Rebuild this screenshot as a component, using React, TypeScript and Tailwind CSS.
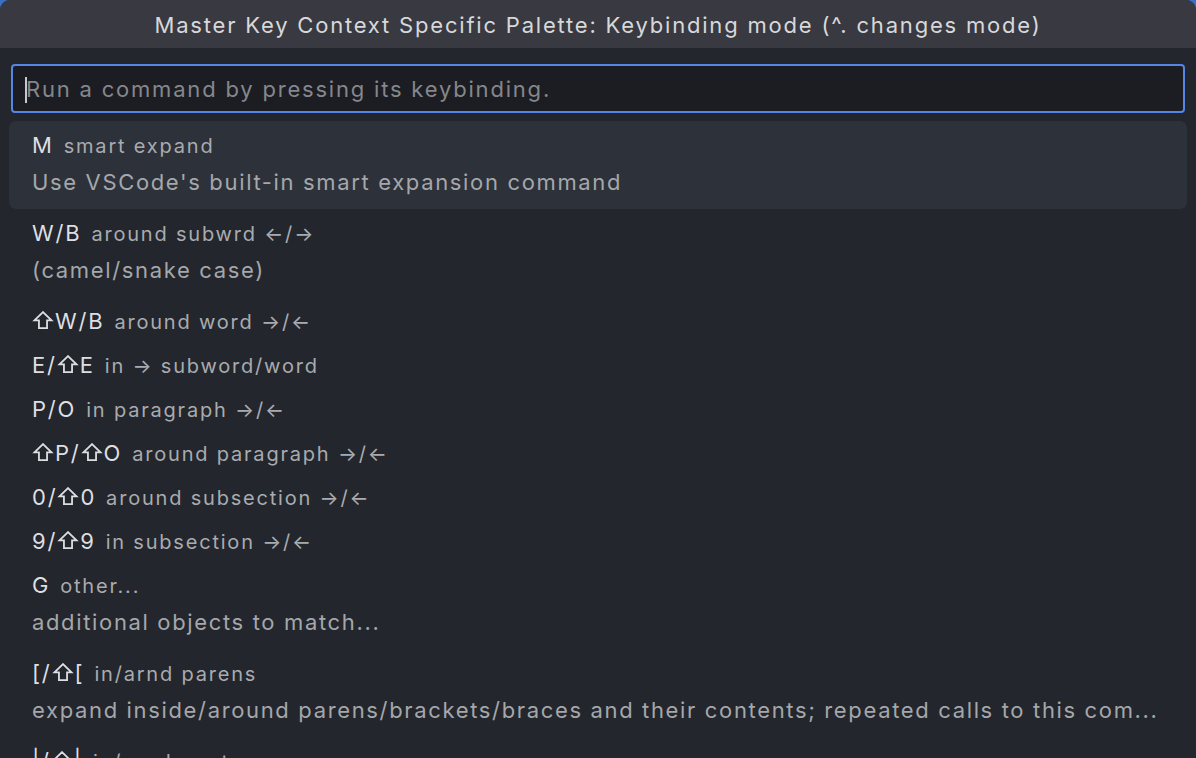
const items: { keys: string[]; label: string; desc?: string; selected?: boolean }[] = [
  { keys: ["M"], label: "smart expand", desc: "Use VSCode's built-in smart expansion command", selected: true },
  { keys: ["W/B"], label: "around subwrd ←/→", desc: "(camel/snake case)" },
  { keys: ["S", "W/B"], label: "around word →/←" },
  { keys: ["E/", "S", "E"], label: "in → subword/word" },
  { keys: ["P/O"], label: "in paragraph →/←" },
  { keys: ["S", "P/", "S", "O"], label: "around paragraph →/←" },
  { keys: ["0/", "S", "0"], label: "around subsection →/←" },
  { keys: ["9/", "S", "9"], label: "in subsection →/←" },
  { keys: ["G"], label: "other...", desc: "additional objects to match..." },
  { keys: ["[/", "S", "["], label: "in/arnd parens", desc: "expand inside/around parens/brackets/braces and their contents; repeated calls to this com..." },
  { keys: ["|/", "S", "|"], label: "in/arnd quotes", desc: "expand inside/around quotes" },
];

// shift key glyph (outlined arrow)
function Shift() {
  return (
    <svg viewBox="0 0 22 20" className="inline-block w-[22px] h-[18px] align-baseline mr-[1px]" fill="none" stroke="currentColor" strokeWidth="2" strokeLinejoin="miter">
      <path d="M11 1.2 L1.5 10.5 H6.5 V19 H15.5 V10.5 H20.5 Z" />
    </svg>
  );
}

export default function App() {
  return (
    <div className="w-[1196px] h-[758px] overflow-hidden bg-[#3b6fc4]" style={{ fontFamily: "Inter, 'Noto Sans', sans-serif" }}>
      <div className="h-full rounded-t-[10px] overflow-hidden bg-[#23262c] flex flex-col tracking-[1.8px]">
        <div className="h-[48px] shrink-0 bg-[#393a41] flex items-center justify-center pt-[2px] text-[22px] text-[#d8d8da]">
          Master Key Context Specific Palette: Keybinding mode (^. changes mode)
        </div>
        <div className="px-[11px] pt-[16px] pb-[8px]">
          <div className="h-[49px] border-2 border-[#5585e6] rounded-[4px] bg-[#1c1d22] flex items-center pl-[12px] pr-3 pt-[2px]">
            <div className="w-[2px] h-[26px] bg-[#c8c8c8]" />
            <span className="text-[22px] text-[#85878c] -ml-[1px]">Run a command by pressing its keybinding.</span>
          </div>
        </div>
        <div className="px-[9px] flex flex-col">
          {items.map((it, i) => (
            <div
              key={i}
              className={`rounded-[7px] pl-[23px] pr-3 flex flex-col justify-start ${it.selected ? "bg-[#2d313a]" : ""} ${it.desc ? "h-[88px] pt-[10px]" : "h-[44px] pt-[10px]"}`}
            >
              <div className="h-[28px] leading-[28px] whitespace-nowrap">
                <span className="text-[22px] text-[#dedfe1]">
                  {it.keys.map((k, j) => (k === "S" ? <Shift key={j} /> : <span key={j}>{k}</span>))}
                </span>
                <span className="ml-[10px] text-[20px] text-[#a9abaf]">{it.label}</span>
              </div>
              {it.desc && (
                <div className="mt-[9px] h-[28px] leading-[28px] text-[22px] text-[#a5a7ab] whitespace-nowrap tracking-[1.65px]">{it.desc}</div>
              )}
            </div>
          ))}
        </div>
      </div>
    </div>
  );
}
